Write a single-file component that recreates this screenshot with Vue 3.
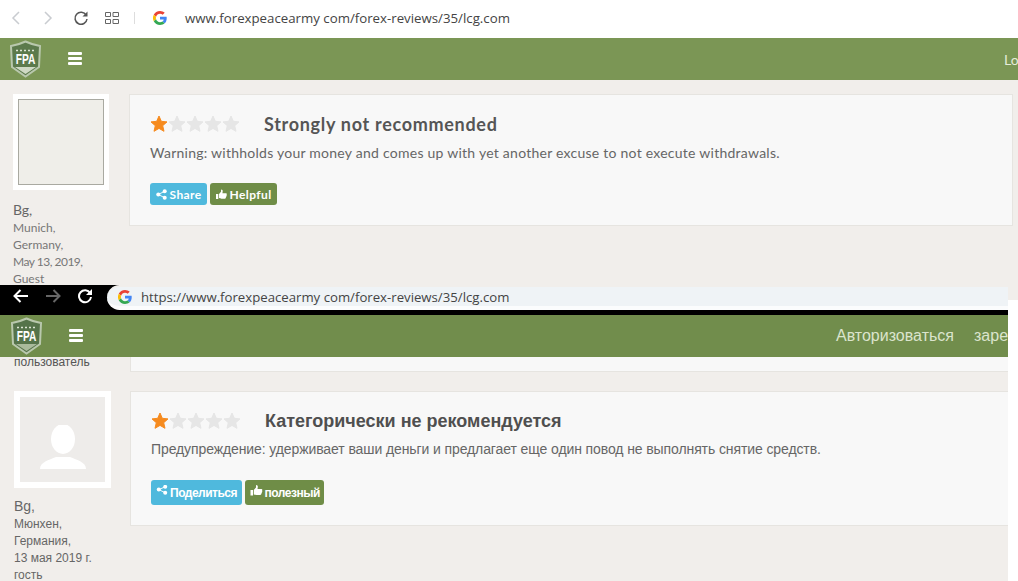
<script setup>
const emptyStars = [1, 2, 3, 4]
const starPoints = '9,1 11.300,6.300 17,6.900 12.700,10.700 14,16.300 9,13.400 4,16.300 5.300,10.700 1,6.900 6.700,6.300'
</script>

<template>
  <div class="page">
    <section class="top">
      <header class="chrome">
        <svg class="ic" width="14" height="16" viewBox="0 0 14 16"><path d="M10 2 4 8l6 6" fill="none" stroke="#c9ccd0" stroke-width="1.500"/></svg>
        <svg class="ic fwd" width="14" height="16" viewBox="0 0 14 16"><path d="m4 2 6 6-6 6" fill="none" stroke="#c9ccd0" stroke-width="1.500"/></svg>
        <svg class="ic reload" width="16" height="16" viewBox="0 0 16 16"><path d="M13.200 5.200A6 6 0 1 0 14 9" fill="none" stroke="#555" stroke-width="1.500"/><path d="M14.500 1.500v5h-5z" fill="#555"/></svg>
        <svg class="ic grid" width="14" height="12" viewBox="0 0 14 12"><path d="M.5.5h5v4h-5zM8 .5h5.500v4H8zM.5 7.500h5v4h-5zM8 7.500h5.500v4H8z" fill="none" stroke="#666"/></svg>
        <span class="sep"></span>
        <svg class="g" width="14" height="14" viewBox="0 0 48 48"><path fill="#EA4335" d="M24 9.500c3.500 0 6.700 1.200 9.200 3.600l6.900-6.900C35.900 2.400 30.500 0 24 0 14.600 0 6.500 5.400 2.600 13.200l8 6.200C12.500 13.700 17.800 9.500 24 9.500z"/><path fill="#4285F4" d="M47 24.500c0-1.600-.1-3.100-.4-4.500H24v9h12.900c-.6 3-2.200 5.500-4.700 7.200l7.700 6C44.400 38.100 47 31.900 47 24.500z"/><path fill="#FBBC05" d="M10.600 28.600a14.500 14.500 0 0 1 0-9.200l-8-6.200a24 24 0 0 0 0 21.600z"/><path fill="#34A853" d="M24 48c6.500 0 11.900-2.100 15.900-5.800l-7.700-6c-2.200 1.500-4.900 2.300-8.200 2.300-6.200 0-11.500-4.200-13.400-9.900l-8 6.200C6.500 42.600 14.600 48 24 48z"/></svg>
        <span class="url">www.forexpeacearmy com/forex-reviews/35/lcg.com</span>
      </header>
      <nav class="nav">
        <svg class="logo" width="33" height="38" viewBox="0 0 33 38">
          <path d="M2 6Q9 5 16.500 1.500 24 5 31 6L30 27 16.500 36.500 3 27z" fill="#5c7a4c" stroke="#b9c8ad" stroke-width="2"/>
          <path d="M7 10.500h19" stroke="#dfe6d6" stroke-width="1.500" stroke-dasharray="2 2"/>
          <path d="M6 27h21l-10.500 7z" fill="#cfd9c4"/>
          <text transform="translate(16.500 24) scale(.68 1)" text-anchor="middle" class="logo-text">FPA</text>
        </svg>
        <span class="burger"><i></i><i></i><i></i></span>
        <span class="login">Lo</span>
      </nav>
      <div class="content">
        <aside class="side">
          <div class="avatar"><div class="avatar-inner"></div></div>
          <p class="name">Bg,</p>
          <p>Munich,</p>
          <p>Germany,</p>
          <p class="date">May 13, 2019,</p>
          <p>Guest</p>
        </aside>
        <article class="card">
          <div class="head">
            <span class="stars">
              <svg class="star on" width="18" height="18" viewBox="0 0 18 18"><polygon :points="starPoints"/></svg>
              <svg v-for="s in emptyStars" :key="s" class="star" width="18" height="18" viewBox="0 0 18 18"><polygon :points="starPoints"/></svg>
            </span>
            <h2>Strongly not recommended</h2>
          </div>
          <p class="text">Warning: withholds your money and comes up with yet another excuse to not execute withdrawals.</p>
          <div class="btns">
            <span class="btn blue">
              <svg width="11" height="11" viewBox="0 0 12 12"><circle cx="9.500" cy="2.500" r="2.200" fill="#fff"/><circle cx="2.500" cy="6" r="2.200" fill="#fff"/><circle cx="9.500" cy="9.500" r="2.200" fill="#fff"/><path d="M9.500 2.500 2.500 6l7 3.500" stroke="#fff" fill="none"/></svg>
              Share
            </span>
            <span class="btn green">
              <svg width="11" height="11" viewBox="0 0 12 12"><path d="M0 5.500h2.500V11H0zM3.300 5.500 5.500 3V.5c1.500 0 2 1 1.800 2.200L7 4.500h4c1 0 1 1.300.5 1.700.4.500.3 1.200-.2 1.500.2.600 0 1.200-.5 1.400.1.800-.3 1.400-1.100 1.400H6c-1 0-1.800-.4-2.700-.6z" fill="#fff"/></svg>
              Helpful
            </span>
          </div>
        </article>
      </div>
    </section>

    <section class="bottom">
      <div class="bottom-main">
        <header class="dark">
          <svg width="18" height="16" viewBox="0 0 18 16"><path d="M16 8H3M8.500 2 2.500 8l6 6" fill="none" stroke="#fff" stroke-width="2"/></svg>
          <svg class="d-fwd" width="18" height="16" viewBox="0 0 18 16"><path d="M2 8h13M9.500 2l6 6-6 6" fill="none" stroke="#666" stroke-width="2"/></svg>
          <svg class="d-reload" width="16" height="16" viewBox="0 0 16 16"><path d="M13.200 5.200A6 6 0 1 0 14 9" fill="none" stroke="#fff" stroke-width="2"/><path d="M15 1v6H9z" fill="#fff"/></svg>
          <div class="pill">
            <svg width="14" height="14" viewBox="0 0 48 48"><path fill="#EA4335" d="M24 9.500c3.500 0 6.700 1.200 9.200 3.600l6.900-6.900C35.900 2.400 30.500 0 24 0 14.600 0 6.500 5.400 2.600 13.200l8 6.200C12.500 13.700 17.800 9.500 24 9.500z"/><path fill="#4285F4" d="M47 24.500c0-1.600-.1-3.100-.4-4.500H24v9h12.900c-.6 3-2.200 5.500-4.700 7.200l7.700 6C44.400 38.100 47 31.900 47 24.500z"/><path fill="#FBBC05" d="M10.600 28.600a14.500 14.500 0 0 1 0-9.200l-8-6.200a24 24 0 0 0 0 21.600z"/><path fill="#34A853" d="M24 48c6.500 0 11.900-2.100 15.900-5.800l-7.700-6c-2.200 1.500-4.900 2.300-8.200 2.300-6.200 0-11.500-4.200-13.400-9.900l-8 6.200C6.500 42.600 14.600 48 24 48z"/></svg>
            <span class="url2">https://www.forexpeacearmy com/forex-reviews/35/lcg.com</span>
          </div>
        </header>
        <nav class="nav nav2">
          <svg class="logo" width="33" height="38" viewBox="0 0 33 38">
            <path d="M2 6Q9 5 16.500 1.500 24 5 31 6L30 27 16.500 36.500 3 27z" fill="#55734a" stroke="#b9c8ad" stroke-width="2"/>
            <path d="M7 10.500h19" stroke="#dfe6d6" stroke-width="1.500" stroke-dasharray="2 2"/>
            <path d="M6 27h21l-10.500 7z" fill="#a9ba9c"/>
            <text transform="translate(16.500 24) scale(.68 1)" text-anchor="middle" class="logo-text">FPA</text>
          </svg>
          <span class="burger"><i></i><i></i><i></i></span>
          <span class="auth">Авторизоваться</span>
          <span class="reg">заре</span>
        </nav>
        <div class="content2">
          <div class="prev">
            <span class="prev-user">пользователь</span>
            <div class="prev-card"></div>
          </div>
          <div class="row">
            <aside class="side side2">
              <div class="avatar a2">
                <div class="avatar-inner2">
                  <svg width="46" height="46" viewBox="0 0 46 46"><ellipse cx="23" cy="14" rx="12" ry="15" fill="#fff"/><path d="M0 44c0-7 9-9 16-12h14c7 3 16 5 16 12z" fill="#fff"/></svg>
                </div>
              </div>
              <p class="name">Bg,</p>
              <p>Мюнхен,</p>
              <p>Германия,</p>
              <p>13 мая 2019 г.</p>
              <p>гость</p>
            </aside>
            <article class="card card2">
              <div class="head">
                <span class="stars">
                  <svg class="star on" width="18" height="18" viewBox="0 0 18 18"><polygon :points="starPoints"/></svg>
                  <svg v-for="s in emptyStars" :key="s" class="star" width="18" height="18" viewBox="0 0 18 18"><polygon :points="starPoints"/></svg>
                </span>
                <h2>Категорически не рекомендуется</h2>
              </div>
              <p class="text">Предупреждение: удерживает ваши деньги и предлагает еще один повод не выполнять снятие средств.</p>
              <div class="btns">
                <span class="btn blue">
                  <svg class="raised" width="14" height="11" viewBox="0 0 12 12"><circle cx="9.500" cy="2" r="2.200" fill="#fff"/><circle cx="2.500" cy="5" r="2.200" fill="#fff"/><circle cx="9.500" cy="8.500" r="2.200" fill="#fff"/><path d="M9.500 2l-7 3 7 3.500" stroke="#fff" fill="none"/></svg>
                  Поделиться
                </span>
                <span class="btn green">
                  <svg class="raised" width="15" height="12" viewBox="0 0 12 12"><path d="M0 5h2.500v5.500H0zM3.300 5 5.500 2.500V0c1.500 0 2 1 1.800 2.200L7 4h4c1 0 1 1.300.5 1.700.4.500.3 1.200-.2 1.500.2.600 0 1.200-.5 1.400.1.800-.3 1.400-1.100 1.400H6c-1 0-1.800-.4-2.700-.6z" fill="#fff"/></svg>
                  полезный
                </span>
              </div>
            </article>
          </div>
        </div>
      </div>
      <div class="strip"></div>
    </section>
  </div>
</template>

<style>
html, body { margin: 0; background: #f1eeeb; }
</style>

<style scoped>
.page { width: 1018px; height: 581px; overflow: hidden; background: #f1eeeb; display: flex; flex-direction: column; }
p, h2 { margin: 0; }

.top { height: 285px; overflow: hidden; flex: none; font-family: "Lato", "Open Sans", sans-serif; }
.chrome { height: 38px; background: #fff; display: flex; align-items: center; padding: 0 0 2px 9px; box-sizing: border-box; }
.fwd { margin-left: 18px; }
.reload { margin-left: 18px; }
.grid { margin-left: 16px; }
.sep { width: 1px; height: 12px; background: #ddd; margin-left: 15px; }
.g { margin-left: 18px; }
.url { margin-left: 18px; font: 13.250px "Open Sans", sans-serif; color: #444; }

.nav { height: 42px; background: #7b9655; display: flex; align-items: center; padding-left: 9px; position: relative; box-sizing: border-box; }
.logo-text { font: 700 15px "Liberation Sans", sans-serif; fill: #fff; }
.burger { display: flex; flex-direction: column; gap: 2px; margin-left: 26px; margin-top: -2px; }
.burger i { display: block; width: 14px; height: 3px; background: #fff; border-radius: 1px; }
.login { position: absolute; left: 1004px; top: 13px; font: 14px "Lato", sans-serif; color: #e6ecd9; }

.content { display: flex; padding: 14px 0 0 13px; }
.side { width: 116px; flex: none; font-size: 12px; line-height: 17px; color: #777; }
.side p { white-space: nowrap; }
.side .name { font-size: 14px; line-height: 18px; color: #666; margin-top: 11px; }
.date { letter-spacing: -.5px; }
.avatar { width: 96px; height: 96px; background: #fff; padding: 5px; box-sizing: border-box; }
.avatar-inner { height: 100%; background: #efeee9; border: 1px solid #a9a9a1; box-sizing: border-box; }
.card { width: 884px; height: 132px; box-sizing: border-box; background: #f8f8f8; border: 1px solid #e6e4e0; padding: 18px 20px; }
.head { display: flex; align-items: center; height: 22px; }
.stars { display: flex; width: 114px; flex: none; }
.star { fill: #e6e6e6; stroke: #e6e6e6; stroke-width: 1; stroke-linejoin: round; flex: none; }
.star.on { fill: #f68b1f; stroke: #f68b1f; }
h2 { font-size: 18px; font-weight: 700; letter-spacing: .7px; color: #555; }
.text { font-size: 14px; letter-spacing: .25px; color: #666; margin-top: 9px; line-height: 18px; }
.btns { display: flex; gap: 3px; margin-top: 21px; }
.btn { display: flex; align-items: center; gap: 3px; height: 22px; padding: 0 5.500px; font-size: 12px; font-weight: 700; letter-spacing: .4px; color: #fff; border-radius: 3px; box-sizing: border-box; }
.blue { background: #4fb9dd; }
.green { background: #6f8d47; }

.bottom { flex: 1; display: flex; font-family: "Liberation Sans", Arial, sans-serif; min-height: 0; }
.bottom-main { width: 1008px; flex: none; overflow: hidden; }
.strip { width: 10px; background: #fff; margin-top: 15px; }
.dark { height: 30px; background: #000; display: flex; align-items: flex-start; padding: 3px 0 0 12px; box-sizing: border-box; position: relative; }
.d-fwd { margin-left: 14px; }
.d-reload { margin-left: 15px; }
.pill { position: absolute; left: 107px; top: 0; right: 0; height: 25px; box-sizing: border-box; background: #eff3f6; border-top: 2px solid #f1eeeb; border-bottom: 4px solid #fbfcfd; border-radius: 13px 0 0 13px; display: flex; align-items: center; padding-left: 11px; }
.url2 { margin-left: 9px; font: 13.200px "Open Sans", sans-serif; color: #444; }
.nav2 { background: #718d4c; padding-left: 10px; }
.nav2 .burger { margin-left: 26px; }
.auth { position: absolute; left: 836px; top: 12px; font-size: 16px; color: #dbe4cd; }
.reg { position: absolute; left: 974px; top: 12px; font-size: 16px; color: #dbe4cd; }

.prev { height: 34px; display: flex; align-items: flex-start; padding-left: 14px; }
.prev-user { font-size: 12px; line-height: 10px; color: #555; width: 116px; flex: none; }
.prev-card { width: 900px; height: 14px; background: #f8f8f8; border: 1px solid #e6e4e0; border-top: 0; flex: none; }
.row { display: flex; padding-left: 14px; }
.side2 { color: #666; line-height: 17px; }
.side2 .name { margin-top: 9px; margin-bottom: 1px; }
.a2 { width: 97px; height: 97px; padding: 6px; }
.avatar-inner2 { height: 100%; background: #eeecea; display: flex; justify-content: center; align-items: flex-end; padding-bottom: 11px; box-sizing: border-box; }
.card2 { width: 900px; height: 135px; flex: none; }
.card2 h2 { font-size: 18px; letter-spacing: 0; color: #4f4f4f; }
.card2 .text { font-size: 14px; letter-spacing: -.1px; margin-top: 8px; }
.card2 .btns { margin-top: 22px; }
.card2 .btn { height: 25px; font-size: 12px; padding: 0 4.500px 0 4px; gap: 1px; letter-spacing: -.5px; }
.raised { margin-top: -4px; }
</style>
